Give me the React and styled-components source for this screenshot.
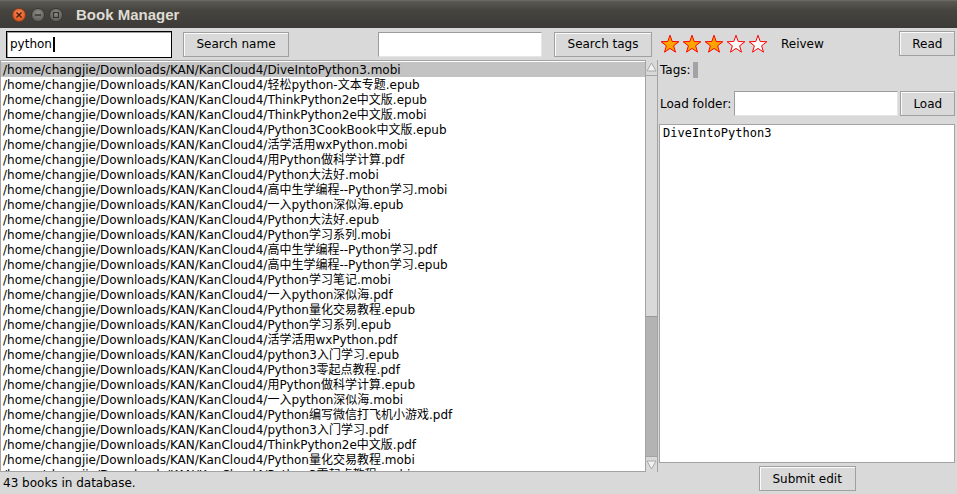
import React from "react";
import styled, { createGlobalStyle } from "styled-components";

const GlobalStyle = createGlobalStyle`
  html, body {
    margin: 0;
    padding: 0;
    background: #d9d9d9;
  }
  body {
    font-family: "DejaVu Sans", "Noto Sans CJK SC", sans-serif;
    font-size: 12px;
    color: #000;
  }
`;

const Window = styled.div`
  width: 957px;
  height: 494px;
  display: flex;
  flex-direction: column;
  background: #d9d9d9;
  overflow: hidden;
`;

const TitleBar = styled.div`
  height: 28px;
  flex: none;
  display: flex;
  align-items: center;
  padding-left: 12px;
  background: linear-gradient(#5a5953, #45443f 35%, #3c3b37);
  border-top: 1px solid #6a6964;
  box-sizing: border-box;
`;

const WinButton = styled.div`
  width: 14px;
  height: 14px;
  border-radius: 50%;
  margin-right: ${(p) => p.$mr}px;
  display: flex;
  align-items: center;
  justify-content: center;
  box-sizing: border-box;
  border: 1px solid ${(p) => (p.$close ? "#8a3a18" : "#3a3935")};
  background: ${(p) =>
    p.$close
      ? "radial-gradient(circle at 50% 35%, #f48a5a, #e25a25 70%)"
      : "radial-gradient(circle at 50% 35%, #8d8c86, #65645f 70%)"};
`;

const Title = styled.div`
  margin-left: 13px;
  font-family: "Liberation Sans", "DejaVu Sans", sans-serif;
  font-weight: bold;
  font-size: 15px;
  color: #dfdbd2;
`;

const Body = styled.div`
  flex: 1;
  display: flex;
  min-height: 0;
`;

const LeftPane = styled.div`
  width: 658px;
  flex: none;
  display: flex;
  flex-direction: column;
`;

const SearchRow = styled.div`
  height: 32px;
  flex: none;
  display: flex;
  align-items: center;
  padding-left: 6px;
  box-sizing: border-box;
`;

const Entry = styled.div`
  box-sizing: border-box;
  width: ${(p) => p.$w}px;
  height: 25px;
  margin-left: ${(p) => p.$ml || 0}px;
  flex: none;
  background: #fff;
  border: 1px solid;
  border-color: #9c9c9c #e6e6e6 #e6e6e6 #9c9c9c;
  display: flex;
  align-items: center;
  padding-left: 3px;
  white-space: nowrap;
`;

const FocusEntry = styled(Entry)`
  height: 27px;
  border: 1px solid #000;
  box-shadow: inset 1px 1px 0 #a0a0a0;
  padding-left: 3px;
`;

const Caret = styled.span`
  display: inline-block;
  width: 2px;
  height: 15px;
  background: #000;
  margin-left: 1px;
`;

const Button = styled.div`
  box-sizing: border-box;
  width: ${(p) => p.$w}px;
  height: 25px;
  margin-left: ${(p) => p.$ml || 0}px;
  background: #d9d9d9;
  border: 1px solid #a0a0a0;
  box-shadow: inset 1px 1px 0 #fbfbfb;
  display: flex;
  align-items: center;
  justify-content: center;
  white-space: nowrap;
  flex: none;
`;

const Label = styled.div`
  flex: none;
  white-space: nowrap;
`;

const ListArea = styled.div`
  flex: 1;
  display: flex;
  min-height: 0;
`;

const List = styled.div`
  width: 645px;
  flex: none;
  box-sizing: border-box;
  background: #fff;
  border: 1px solid #a3a3a3;
  border-right: none;
  overflow: hidden;
  padding-top: 1px;
`;

const Row = styled.div`
  height: 15px;
  line-height: 17px;
  padding-left: 2px;
  white-space: nowrap;
  background: ${(p) => (p.$selected ? "#c3c3c3" : "transparent")};
`;

const ScrollBar = styled.div`
  width: 13px;
  flex: none;
  display: flex;
  flex-direction: column;
  box-sizing: border-box;
  border-left: 1px solid #a3a3a3;
  border-right: 1px solid #a3a3a3;
  background: #d9d9d9;
`;

const Arrow = styled.div`
  height: 15px;
  flex: none;
  display: flex;
  align-items: center;
  justify-content: center;
  border-bottom: ${(p) => (p.$down ? "none" : "1px solid #a3a3a3")};
  border-top: ${(p) => (p.$down ? "1px solid #a3a3a3" : "none")};
`;

const Trough = styled.div`
  flex: 1;
  background: #b3b3b3;
  display: flex;
  flex-direction: column;
`;

const Thumb = styled.div`
  flex: none;
  background: #d9d9d9;
  border-bottom: 1px solid #9a9a9a;
`;

const Status = styled.div`
  height: 22px;
  flex: none;
  line-height: 22px;
  padding-left: 3px;
`;

const RightPane = styled.div`
  flex: 1;
  display: flex;
  flex-direction: column;
  padding: 0 2px 0 1px;
`;

const TopRow = styled.div`
  height: 32px;
  flex: none;
  display: flex;
  align-items: center;
  padding-left: 1px;
`;

const Stars = styled.div`
  display: flex;
  gap: 2px;
`;

const Review = styled.div`
  margin-left: 13px;
`;

const ReadButton = styled(Button)`
  margin-left: auto;
  align-self: flex-start;
  margin-top: 3px;
`;

const TagsRow = styled.div`
  height: 20px;
  flex: none;
  display: flex;
  align-items: center;
  padding-left: 1px;
`;

const TagBar = styled.div`
  width: 5px;
  height: 16px;
  margin-left: 2px;
  background: #a3a3a3;
`;

const LoadRow = styled.div`
  height: 31px;
  margin-top: 8px;
  flex: none;
  display: flex;
  align-items: center;
  padding-left: 1px;
`;

const TextBox = styled.div`
  height: 339px;
  margin-top: 5px;
  flex: none;
  box-sizing: border-box;
  background: #fff;
  border: 1px solid #a3a3a3;
  padding: 1px 3px;
  font-family: "DejaVu Sans Mono", monospace;
  font-size: 12px;
  line-height: 15px;
`;

const SubmitRow = styled.div`
  flex: 1;
  display: flex;
  justify-content: center;
  padding-top: 3px;
`;

const starPoints = (() => {
  const pts = [];
  for (let i = 0; i < 10; i++) {
    const r = i % 2 === 0 ? 9.3 : 3.8;
    const a = ((-90 + i * 36) * Math.PI) / 180;
    pts.push(`${(10 + r * Math.cos(a)).toFixed(2)},${(10.6 + r * Math.sin(a)).toFixed(2)}`);
  }
  return pts.join(" ");
})();

function Star({ filled }) {
  return (
    <svg width="20" height="20" viewBox="0 0 20 20">
      <polygon points={starPoints} fill={filled ? "#ffa500" : "#fff"} stroke="#ff0000" strokeWidth="1" />
    </svg>
  );
}

function ArrowIcon({ down }) {
  return (
    <svg width="11" height="11" viewBox="0 0 11 11">
      <polygon
        points={down ? "1,2 10,2 5.5,10" : "1,9 10,9 5.5,1"}
        fill="#f2f2f2"
        stroke="#a8a8a8"
        strokeWidth="1"
      />
    </svg>
  );
}

const prefix = "/home/changjie/Downloads/KAN/KanCloud4/";
const books = [
  "DiveIntoPython3.mobi",
  "轻松python-文本专题.epub",
  "ThinkPython2e中文版.epub",
  "ThinkPython2e中文版.mobi",
  "Python3CookBook中文版.epub",
  "活学活用wxPython.mobi",
  "用Python做科学计算.pdf",
  "Python大法好.mobi",
  "高中生学编程--Python学习.mobi",
  "一入python深似海.epub",
  "Python大法好.epub",
  "Python学习系列.mobi",
  "高中生学编程--Python学习.pdf",
  "高中生学编程--Python学习.epub",
  "Python学习笔记.mobi",
  "一入python深似海.pdf",
  "Python量化交易教程.epub",
  "Python学习系列.epub",
  "活学活用wxPython.pdf",
  "python3入门学习.epub",
  "Python3零起点教程.pdf",
  "用Python做科学计算.epub",
  "一入python深似海.mobi",
  "Python编写微信打飞机小游戏.pdf",
  "python3入门学习.pdf",
  "ThinkPython2e中文版.pdf",
  "Python量化交易教程.mobi",
  "Python3零起点教程.mobi",
];

export default function App() {
  return (
    <Window>
      <GlobalStyle />
      <TitleBar>
        <WinButton $close $mr={5}>
          <svg width="8" height="8" viewBox="0 0 8 8">
            <path d="M1.5 1.5 L6.5 6.5 M6.5 1.5 L1.5 6.5" stroke="#4a1c08" strokeWidth="1.4" />
          </svg>
        </WinButton>
        <WinButton $mr={4}>
          <svg width="8" height="8" viewBox="0 0 8 8">
            <path d="M1 4 H7" stroke="#33322e" strokeWidth="1.4" />
          </svg>
        </WinButton>
        <WinButton $mr={0}>
          <svg width="8" height="8" viewBox="0 0 8 8">
            <rect x="1.5" y="1.5" width="5" height="5" fill="none" stroke="#33322e" strokeWidth="1.2" />
          </svg>
        </WinButton>
        <Title>Book Manager</Title>
      </TitleBar>
      <Body>
        <LeftPane>
          <SearchRow>
            <FocusEntry $w={166}>
              python
              <Caret />
            </FocusEntry>
            <Button $w={106} $ml={11}>Search name</Button>
            <Entry $w={164} $ml={89} />
            <Button $w={98} $ml={12}>Search tags</Button>
          </SearchRow>
          <ListArea>
            <List>
              {books.map((b, i) => (
                <Row key={i} $selected={i === 0}>
                  {prefix + b}
                </Row>
              ))}
            </List>
            <ScrollBar>
              <Arrow>
                <ArrowIcon />
              </Arrow>
              <Trough>
                <Thumb style={{ height: 240 }} />
              </Trough>
              <Arrow $down>
                <ArrowIcon down />
              </Arrow>
            </ScrollBar>
          </ListArea>
          <Status>43 books in database.</Status>
        </LeftPane>
        <RightPane>
          <TopRow>
            <Stars>
              {[1, 2, 3, 4, 5].map((n) => (
                <Star key={n} filled={n <= 3} />
              ))}
            </Stars>
            <Review>Reivew</Review>
            <ReadButton $w={56}>Read</ReadButton>
          </TopRow>
          <TagsRow>
            <Label>Tags:</Label>
            <TagBar />
          </TagsRow>
          <LoadRow>
            <Label>Load folder:</Label>
            <Entry $w={164} $ml={3} />
            <Button $w={55} $ml={2}>Load</Button>
          </LoadRow>
          <TextBox>DiveIntoPython3</TextBox>
          <SubmitRow>
            <Button $w={97}>Submit edit</Button>
          </SubmitRow>
        </RightPane>
      </Body>
    </Window>
  );
}
